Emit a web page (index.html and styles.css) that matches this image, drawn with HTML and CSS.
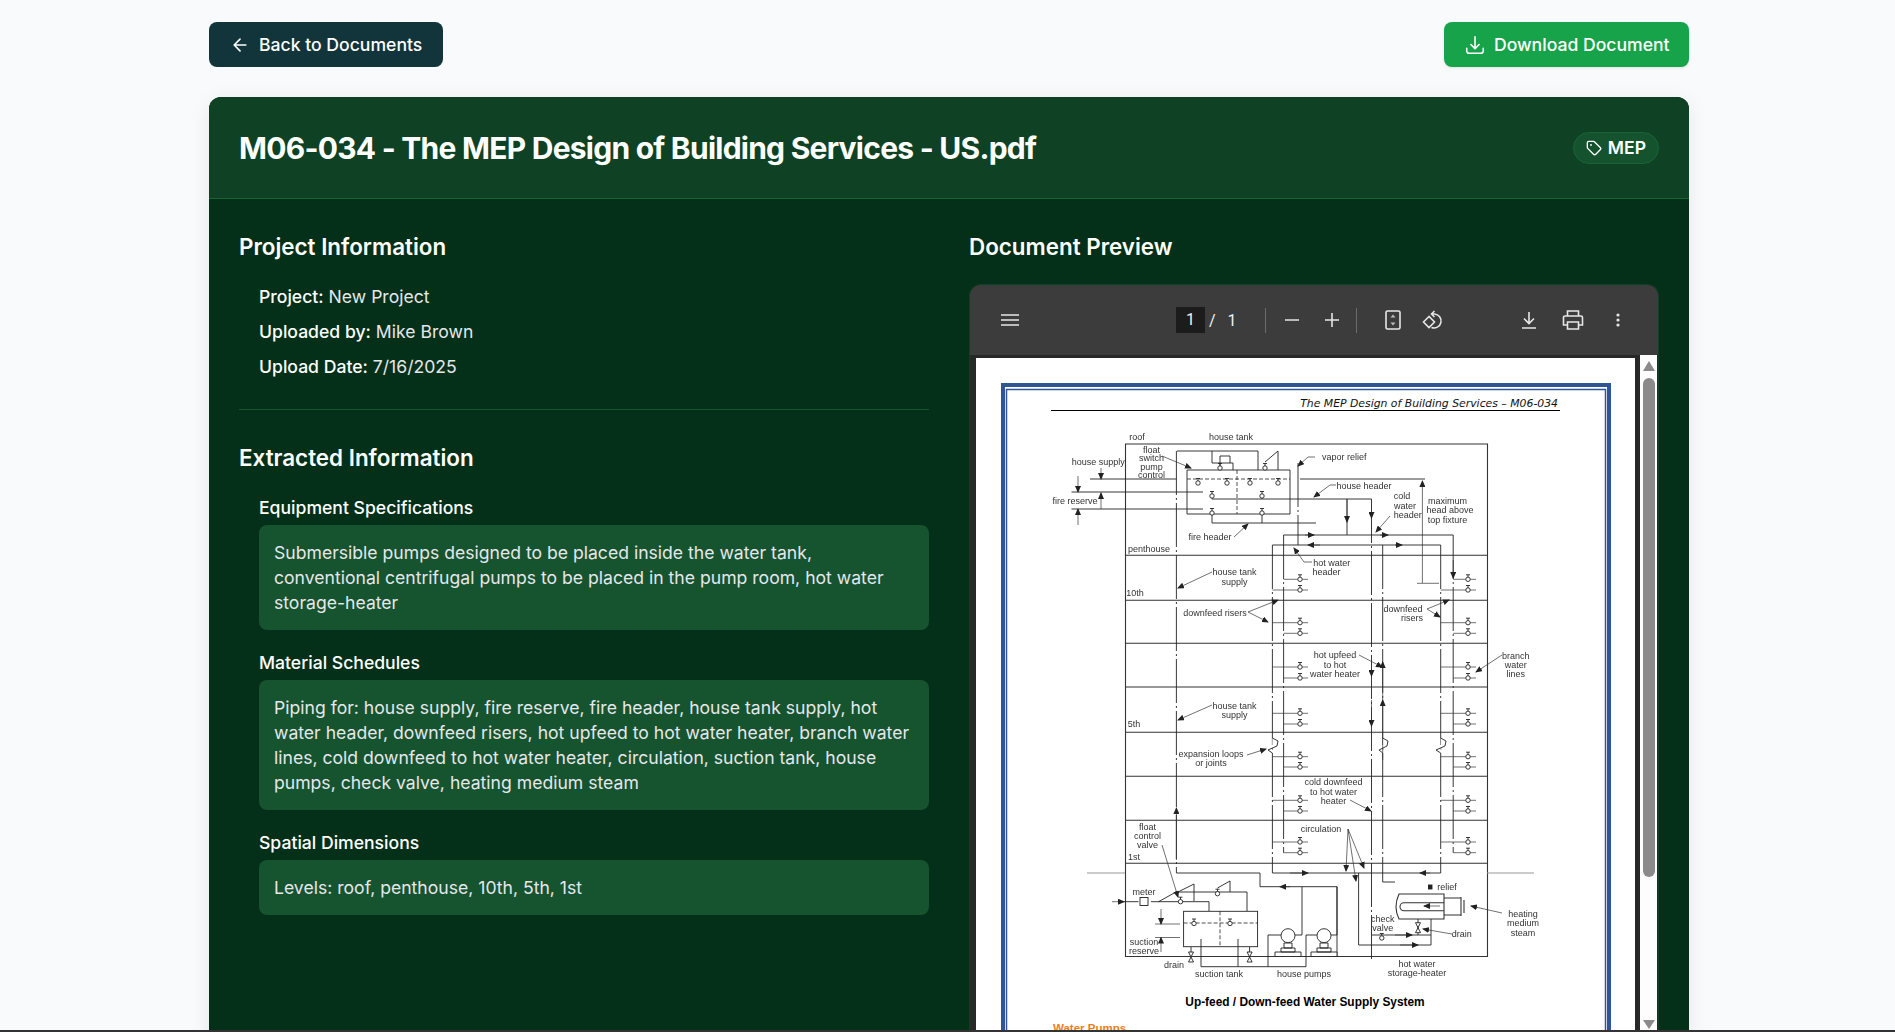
FILE: index.html
```html
<!DOCTYPE html>
<html lang="en">
<head>
  <meta charset="UTF-8" />
  <title>M06-034 - The MEP Design of Building Services - US.pdf</title>
  <link rel="stylesheet" href="styles.css">
</head>
<body>
  <div class="page">
    <div class="top-actions">
      <a class="btn btn-back" href="#">
        <svg class="ico" width="20" height="20" viewBox="0 0 24 24"><path d="M19 12H5M12 19l-7-7 7-7"/></svg>
        Back to Documents
      </a>
      <a class="btn btn-download" href="#">
        <svg class="ico" width="22" height="22" viewBox="0 0 24 24"><path d="M3 15.5v3a2.5 2.5 0 0 0 2.5 2.5h13a2.5 2.5 0 0 0 2.5-2.5v-3M7.5 11.5 12 16l4.500-4.500M12 16V3"/></svg>
        Download Document
      </a>
    </div>

    <div class="doc-card">
      <div class="doc-header">
        <h1>M06-034 - The MEP Design of Building Services - US.pdf</h1>
        <span class="tag">
          <svg class="ico" width="16" height="16" viewBox="0 0 24 24"><path d="M12.586 2.586A2 2 0 0 0 11.172 2H4a2 2 0 0 0-2 2v7.172a2 2 0 0 0 .586 1.414l8.704 8.704a2.426 2.426 0 0 0 3.420 0l6.580-6.580a2.426 2.426 0 0 0 0-3.420z"/><circle cx="7.500" cy="7.500" r=".5"/></svg>
          MEP
        </span>
      </div>

      <div class="doc-body">
        <div class="col-info">
          <h2>Project Information</h2>
          <div class="meta">
            <p><strong>Project:</strong> New Project</p>
            <p><strong>Uploaded by:</strong> Mike Brown</p>
            <p><strong>Upload Date:</strong> 7/16/2025</p>
          </div>
          <hr>
          <h2>Extracted Information</h2>
          <div class="extract">
            <h3>Equipment Specifications</h3>
            <div class="extract-box">Submersible pumps designed to be placed inside the water tank, conventional centrifugal pumps to be placed in the pump room, hot water storage-heater</div>
            <h3>Material Schedules</h3>
            <div class="extract-box">Piping for: house supply, fire reserve, fire header, house tank supply, hot water header, downfeed risers, hot upfeed to hot water heater, branch water lines, cold downfeed to hot water heater, circulation, suction tank, house pumps, check valve, heating medium steam</div>
            <h3>Spatial Dimensions</h3>
            <div class="extract-box">Levels: roof, penthouse, 10th, 5th, 1st</div>
          </div>
        </div>

        <div class="col-preview">
          <h2>Document Preview</h2>
          <div class="viewer">
            <div class="viewer-bar">
              <div class="bar-left">
                <svg class="tool" width="18" height="12" viewBox="0 0 18 12"><path d="M0 1h18M0 6h18M0 11h18"/></svg>
              </div>
              <span class="page-num">1</span>
              <span class="page-of">/</span>
              <span class="page-total">1</span>
              <i class="sep sep-first"></i>
              <button class="tool-btn"><svg class="tool" width="14" height="14" viewBox="0 0 14 14"><path d="M0 7h14"/></svg></button>
              <button class="tool-btn"><svg class="tool" width="14" height="14" viewBox="0 0 14 14"><path d="M0 7h14M7 0v14"/></svg></button>
              <i class="sep"></i>
              <button class="tool-btn tool-fit"><svg class="tool" width="16" height="20" viewBox="0 0 16 20"><rect x="1" y="1" width="14" height="18" rx="1.500"/><path class="solid" d="M8 4.500 10.500 7.500h-5zM8 15.500 5.500 12.500h5z"/></svg></button>
              <button class="tool-btn"><svg class="tool" width="22" height="20" viewBox="0 0 22 20"><path d="M10 4h2.500a7 7 0 1 1-3 13.500M12.500 1 9.500 4l3 3"/><path d="M7 6.500 1.500 12 7 17.500 12.500 12z"/></svg></button>
              <button class="tool-btn tool-save"><svg class="tool" width="16" height="18" viewBox="0 0 16 18"><path d="M8 1v11M3 7.500 8 12.500l5-5M1 17h14"/></svg></button>
              <button class="tool-btn tool-print"><svg class="tool" width="22" height="20" viewBox="0 0 22 20"><path d="M5.500 6V1h11v5M5.500 15H1.500V7.500a1.500 1.500 0 0 1 1.500-1.500h16a1.500 1.500 0 0 1 1.500 1.500V15h-4M5.500 12h11v7h-11z"/></svg></button>
              <button class="tool-btn tool-more"><svg width="4" height="14" viewBox="0 0 4 14"><circle cx="2" cy="2" r="1.600"/><circle cx="2" cy="7" r="1.600"/><circle cx="2" cy="12" r="1.600"/></svg></button>
            </div>
            <div class="viewer-main">
              <div class="pdf-sheet">
                <svg class="drawing" width="659" height="672" viewBox="976 358 659 672">
                  <defs>
                    <marker id="ah" markerWidth="7" markerHeight="6" refX="6" refY="3" orient="auto" markerUnits="userSpaceOnUse"><path d="M0 0 7 3 0 6z" fill="#222"/></marker>
                    <g id="vlv"><path d="M-2-4.500H2M0-4.500V-2" /><circle r="2.200" fill="#fff"/></g>
                    <g id="dv"><path d="M-2.500-5H2.500L-2.500 5H2.500z" fill="#fff"/></g>
                  </defs>

                  <rect class="frame-out" x="1003" y="385" width="606" height="700"/>
                  <rect class="frame-in" x="1006.500" y="389.500" width="599" height="700"/>
                  <text class="running" x="1558" y="407" text-anchor="end">The MEP Design of Building Services – M06-034</text>
                  <path class="rule" d="M1051 410.500H1560"/>

                  <g class="art">
                    <!-- building and floors -->
                    <path class="heavy" d="M1125.500 444H1487.500V956.500H1125.500ZM1125.500 555.300H1487.500M1125.500 600.300H1487.500M1125.500 643.300H1487.500M1125.500 687H1487.500M1125.500 732.300H1487.500M1125.500 776.300H1487.500M1125.500 820.300H1487.500M1125.500 863.300H1487.500"/>
                    <path class="ground" d="M1087 873H1125M1487 873H1534"/>

                    <!-- risers -->
                    <path class="pipe" d="M1272.400 545V873M1283.600 535V852.700M1371.500 499V960M1382.700 545V882H1395M1440.700 545V873M1453.200 535V852.700M1176.400 451V873"/>
                    <path class="line" d="M1283.600 535H1453.200M1272.400 545H1440.700M1272.400 873H1440.700M1300 479H1425M1090 479H1176.400M1071.500 492H1203M1071.500 509H1203"/>
                    <path class="pipe" d="M1298 463V545"/>

                    <!-- roof tank -->
                    <path class="line" d="M1187 514V470H1290V514ZM1177 451H1258V470M1212 451V463H1233V470M1220 466V456H1230V463M1265 462 1278 451V470"/>
                    <path class="water" d="M1187 479H1290M1237 470V514"/>
                    <path class="line" d="M1212 495V499H1371.500M1262 495V499M1212 512V523H1316M1262 512V523M1347 499V535"/>
                    <use href="#vlv" x="1198" y="483"/><use href="#vlv" x="1227" y="483"/><use href="#vlv" x="1250" y="483"/><use href="#vlv" x="1278" y="483"/>
                    <use href="#vlv" x="1220" y="468"/><use href="#vlv" x="1265" y="468"/>
                    <use href="#vlv" x="1212" y="496"/><use href="#vlv" x="1262" y="496"/><use href="#vlv" x="1212" y="513"/><use href="#vlv" x="1262" y="513"/>

                    <!-- branch take-offs -->
                    <path class="thin" d="M1283.600 579.300H1308M1272.400 590H1308M1272.400 622.700H1308M1283.600 633.300H1308M1272.400 667H1308M1283.600 678H1308M1272.400 713.300H1308M1283.600 724H1308M1272.400 756.700H1308M1283.600 767H1308M1272.400 800.300H1308M1283.600 811H1308M1272.400 842H1308M1283.600 852.700H1308"/>
                    <path class="thin" d="M1453.200 579.300H1476M1440.700 590H1476M1440.700 622.700H1476M1453.200 633.300H1476M1440.700 667H1476M1453.200 678H1476M1440.700 713.300H1476M1453.200 724H1476M1440.700 756.700H1476M1453.200 767H1476M1440.700 800.300H1476M1453.200 811H1476M1440.700 842H1476M1453.200 852.700H1476"/>
                    <use href="#vlv" x="1300" y="579.300"/><use href="#vlv" x="1300" y="590"/><use href="#vlv" x="1300" y="622.700"/><use href="#vlv" x="1300" y="633.300"/><use href="#vlv" x="1300" y="667"/><use href="#vlv" x="1300" y="678"/><use href="#vlv" x="1300" y="713.300"/><use href="#vlv" x="1300" y="724"/><use href="#vlv" x="1300" y="756.700"/><use href="#vlv" x="1300" y="767"/><use href="#vlv" x="1300" y="800.300"/><use href="#vlv" x="1300" y="811"/><use href="#vlv" x="1300" y="842"/><use href="#vlv" x="1300" y="852.700"/>
                    <use href="#vlv" x="1468" y="579.300"/><use href="#vlv" x="1468" y="590"/><use href="#vlv" x="1468" y="622.700"/><use href="#vlv" x="1468" y="633.300"/><use href="#vlv" x="1468" y="667"/><use href="#vlv" x="1468" y="678"/><use href="#vlv" x="1468" y="713.300"/><use href="#vlv" x="1468" y="724"/><use href="#vlv" x="1468" y="756.700"/><use href="#vlv" x="1468" y="767"/><use href="#vlv" x="1468" y="800.300"/><use href="#vlv" x="1468" y="811"/><use href="#vlv" x="1468" y="842"/><use href="#vlv" x="1468" y="852.700"/>

                    <!-- expansion loops -->
                    <path class="loop" d="M1272.400 738 1278 741 1277 746 1268 750 1272.400 753M1382.700 738 1388 741 1387 746 1379 750 1382.700 753M1440.700 738 1446 741 1445 746 1436 750 1440.700 753"/>

                    <!-- dimension arrows and leaders -->
                    <path class="thin" marker-end="url(#ah)" d="M1078 476V492"/>
                    <path class="thin" marker-end="url(#ah)" d="M1078 525V509"/>
                    <path class="thin" marker-end="url(#ah)" d="M1101 468V479"/>
                    <path class="thin" marker-end="url(#ah)" d="M1101 509V493"/>
                    <path class="thin" marker-end="url(#ah)" d="M1422.400 583V481"/>
                    <path class="thin" d="M1417 583.300H1439"/>
                    <path class="thin" marker-end="url(#ah)" d="M1347 499V522"/>
                    <path class="thin" marker-end="url(#ah)" d="M1371.500 505V518"/>
                    <path class="thin" marker-end="url(#ah)" d="M1453.200 560V578"/>
                    <path class="thin" marker-end="url(#ah)" d="M1382.700 700V662"/>
                    <path class="thin" marker-end="url(#ah)" d="M1382.700 760V700"/>
                    <path class="thin" marker-end="url(#ah)" d="M1371.500 660V676"/>
                    <path class="thin" marker-end="url(#ah)" d="M1371.500 700V726"/>
                    <path class="thin" marker-end="url(#ah)" d="M1176.400 860V808"/>
                    <path class="thin" marker-end="url(#ah)" d="M1305 535H1314"/>
                    <path class="thin" marker-end="url(#ah)" d="M1380 535H1388"/>
                    <path class="thin" marker-end="url(#ah)" d="M1320 545H1308"/>
                    <path class="thin" marker-end="url(#ah)" d="M1395 545H1402"/>
                    <path class="thin" marker-end="url(#ah)" d="M1290 873H1308"/>
                    <path class="thin" marker-end="url(#ah)" d="M1430 873H1420"/>
                    <path class="thin" marker-end="url(#ah)" d="M1290 886.700H1280"/>
                    <path class="thin" marker-end="url(#ah)" d="M1162 456 1191 468"/>
                    <path class="thin" marker-end="url(#ah)" d="M1315 457H1308L1298 466"/>
                    <path class="thin" marker-end="url(#ah)" d="M1336 485H1330L1314 497"/>
                    <path class="thin" marker-end="url(#ah)" d="M1390 516 1376 532"/>
                    <path class="thin" marker-end="url(#ah)" d="M1234 537 1248 524"/>
                    <path class="thin" marker-end="url(#ah)" d="M1312 562H1304L1294 548"/>
                    <path class="thin" marker-end="url(#ah)" d="M1212 572 1178 588"/>
                    <path class="thin" marker-end="url(#ah)" d="M1248 612 1278 600"/>
                    <path class="thin" marker-end="url(#ah)" d="M1248 612 1268 622"/>
                    <path class="thin" marker-end="url(#ah)" d="M1427 609 1449 600"/>
                    <path class="thin" marker-end="url(#ah)" d="M1427 609 1440 617"/>
                    <path class="thin" marker-end="url(#ah)" d="M1359 655 1382 667"/>
                    <path class="thin" marker-end="url(#ah)" d="M1502 655 1476 672"/>
                    <path class="thin" marker-end="url(#ah)" d="M1212 705 1178 720"/>
                    <path class="thin" marker-end="url(#ah)" d="M1247 755 1266 749"/>
                    <path class="thin" marker-end="url(#ah)" d="M1350 800 1371 811"/>
                    <path class="thin" marker-end="url(#ah)" d="M1348 829 1346 871"/>
                    <path class="thin" marker-end="url(#ah)" d="M1348 829 1356 881"/>
                    <path class="thin" marker-end="url(#ah)" d="M1348 829 1364 868"/>
                    <path class="thin" marker-end="url(#ah)" d="M1162 845 1178 897"/>
                    <path class="thin" marker-end="url(#ah)" d="M1502 913 1471 906"/>
                    <path class="thin" marker-end="url(#ah)" d="M1452 934 1423 929"/>
                    <path class="thin" marker-end="url(#ah)" d="M1112 901.700H1124"/>

                    <!-- basement piping -->
                    <path class="line" d="M1176.400 873H1260V886.700H1337V956.500M1302 886.700V935H1294M1337 886.700V935H1330"/>
                    <path class="line" d="M1124 901.700H1138.500M1151 901.700H1209V911M1158.500 901.700 1176 892H1247V911M1178 892 1194 884V901M1217.500 888 1230 881V892"/>
                    <rect class="line" x="1140" y="897.500" width="8" height="8" fill="#fff"/>
                    <use href="#vlv" x="1180.500" y="901.700"/><use href="#vlv" x="1217.500" y="893.700"/>
                    <rect class="line" x="1183.600" y="911.300" width="74" height="35.400" fill="#fff"/>
                    <path class="water" d="M1183.600 923H1257.600M1220 911.300V946.700"/>
                    <use href="#vlv" x="1194" y="923.500"/><use href="#vlv" x="1230" y="923.500"/>
                    <path class="thin" d="M1155 924H1180M1155 937.500H1180"/>
                    <path class="thin" marker-end="url(#ah)" d="M1161 909V924"/>
                    <path class="thin" marker-end="url(#ah)" d="M1161 952V937.500"/>
                    <path class="line" d="M1201 939V966.700H1306V935H1324M1238 939V966.700M1268 935V966.700M1268 935H1282M1191 947V952M1249.600 947V952"/>
                    <use href="#dv" x="1191" y="957"/><use href="#dv" x="1249.600" y="957"/>

                    <!-- house pumps -->
                    <g class="line">
                      <circle cx="1288" cy="935.700" r="7" fill="#fff"/><circle cx="1324" cy="935.700" r="7" fill="#fff"/>
                      <path d="M1284 943H1292V948H1284ZM1281 948H1295V952H1281ZM1275 952H1301V956.500H1275ZM1320 943H1328V948H1320ZM1317 948H1331V952H1317ZM1311 952H1337V956.500H1311Z" fill="#fff"/>
                    </g>

                    <!-- storage heater -->
                    <path class="heavy" d="M1399 894H1444V919H1399Q1393 907 1399 894ZM1404 902.700H1444V910.700H1404A4 4 0 0 1 1404 902.700ZM1444 898H1461M1444 915H1461M1461 897V916M1464 900V913"/>
                    <rect x="1428.500" y="885" width="3.500" height="4" fill="#222"/>
                    <path class="line" d="M1431 919V945H1358.600V873M1372 935H1431M1418 919V935"/>
                    <use href="#vlv" x="1381.800" y="938"/><use href="#dv" x="1418" y="927.700"/>
                    <path class="thin" marker-end="url(#ah)" d="M1440 906H1424"/>
                    <path class="thin" marker-end="url(#ah)" d="M1395 935H1412"/>
                    <path class="thin" marker-end="url(#ah)" d="M1400 945H1418"/>

                    <!-- labels -->
                    <g class="lbl">
                      <text x="1137" y="440">roof</text><text x="1231" y="440">house tank</text>
                      <text x="1151.400" y="453">float</text><text x="1151.400" y="461">switch</text><text x="1151.400" y="469.500">pump</text><text x="1151.400" y="478">control</text>
                      <text x="1098.300" y="464.500">house supply</text><text x="1344.300" y="460">vapor relief</text><text x="1075" y="504">fire reserve</text><text x="1364" y="488.500">house header</text>
                      <text x="1402" y="499">cold</text><text x="1405" y="508.500">water</text><text x="1407.700" y="517.500">header</text>
                      <text x="1447.400" y="504">maximum</text><text x="1450" y="513">head above</text><text x="1447.400" y="522.500">top fixture</text>
                      <text x="1210" y="540">fire header</text><text x="1149" y="552">penthouse</text>
                      <text x="1331.800" y="566">hot water</text><text x="1326.400" y="575">header</text>
                      <text x="1234.500" y="575">house tank</text><text x="1234.500" y="584.500">supply</text><text x="1135" y="595.500">10th</text>
                      <text x="1215" y="616">downfeed risers</text><text x="1403" y="612">downfeed</text><text x="1412" y="621">risers</text>
                      <text x="1335" y="658">hot upfeed</text><text x="1335" y="667.500">to hot</text><text x="1335" y="677">water heater</text>
                      <text x="1515.700" y="658.500">branch</text><text x="1515.700" y="668">water</text><text x="1515.700" y="677">lines</text>
                      <text x="1234.500" y="708.500">house tank</text><text x="1234.500" y="718">supply</text><text x="1134" y="727">5th</text>
                      <text x="1211" y="756.500">expansion loops</text><text x="1211" y="766">or joints</text>
                      <text x="1333.600" y="785">cold downfeed</text><text x="1333.600" y="794.500">to hot water</text><text x="1333.600" y="804">heater</text>
                      <text x="1321" y="832">circulation</text>
                      <text x="1147.400" y="829.500">float</text><text x="1147.400" y="839">control</text><text x="1147.400" y="848">valve</text><text x="1134" y="859.500">1st</text>
                      <text x="1144" y="894.500">meter</text><text x="1447" y="890">relief</text>
                      <text x="1523" y="917">heating</text><text x="1523" y="926">medium</text><text x="1523" y="935.500">steam</text>
                      <text x="1382.700" y="922">check</text><text x="1382.700" y="931">valve</text><text x="1461.700" y="937">drain</text>
                      <text x="1144" y="945">suction</text><text x="1144" y="954">reserve</text><text x="1174" y="967.500">drain</text>
                      <text x="1219" y="977">suction tank</text><text x="1304" y="977">house pumps</text>
                      <text x="1417" y="967">hot water</text><text x="1417" y="976">storage-heater</text>
                    </g>
                  </g>

                  <text class="caption" x="1305" y="1006" text-anchor="middle">Up-feed / Down-feed Water Supply System</text>
                  <text class="sub-head" x="1053" y="1032">Water Pumps</text>
                </svg>
              </div>
              <div class="scroll-track">
                <span class="arrow-up"></span>
                <span class="scroll-thumb"></span>
                <span class="arrow-down"></span>
              </div>
            </div>
          </div>
        </div>
      </div>
    </div>
  </div>
  <div class="window-edge"></div>
</body>
</html>
```

FILE: styles.css
```css
* {
  box-sizing: border-box;
  margin: 0;
  padding: 0;
}
html, body {
  height: 1032px;
  overflow: hidden;
}
body {
  background: #f8fafc;
  font-family: Inter, 'Noto Sans', sans-serif;
  color: #fff;
}
.page {
  height: 1030px;
  overflow: hidden;
  padding: 22px 206px 0 209px;
}
.window-edge {
  height: 2px;
  background: #333;
}
.top-actions {
  display: flex;
  justify-content: space-between;
  margin-bottom: 30px;
}
.btn {
  display: flex;
  align-items: center;
  gap: 10px;
  height: 45px;
  padding: 0 20px;
  border-radius: 8px;
  color: #fff;
  font-size: 17.6px;
  font-weight: 500;
  white-space: nowrap;
  text-decoration: none;
}
.btn-back {
  background: #12343b;
  width: 234px;
  padding-left: 21px;
  gap: 9px;
}
.btn-download {
  background: #16a34a;
  width: 245px;
  gap: 8px;
  box-shadow: 0 1px 3px rgba(0,0,0,0.1);
}
.ico {
  fill: none;
  stroke: currentColor;
  stroke-width: 2;
  stroke-linecap: round;
  stroke-linejoin: round;
  flex: none;
}
.btn-download .ico {
  stroke-width: 1.7;
}
.doc-card {
  background: #042f18;
  border-radius: 12px;
  box-shadow: 0 4px 20px rgba(0,0,0,0.08);
  height: 1000px;
  overflow: hidden;
}
.doc-header {
  display: flex;
  justify-content: space-between;
  align-items: center;
  height: 102px;
  padding: 0 30px;
  background: #0f4224;
  border-bottom: 1px solid #166534;
}
.doc-header h1 {
  font-size: 30px;
  font-weight: 700;
  letter-spacing: -0.75px;
}
.tag {
  display: flex;
  align-items: center;
  gap: 6px;
  height: 32px;
  padding: 0 12px;
  background: #14532d;
  border: 1px solid #166534;
  border-radius: 16px;
  font-size: 17.6px;
  font-weight: 600;
}
.doc-body {
  display: grid;
  grid-template-columns: 690px 690px;
  gap: 40px;
  padding: 32px 30px 0;
}
h2 {
  font-size: 22.4px;
  font-weight: 600;
  line-height: 32px;
}
.meta {
  padding: 21px 0 0 20px;
}
.meta p {
  font-size: 17.6px;
  line-height: 25px;
  margin-bottom: 10px;
  color: #e5e7eb;
}
.meta strong {
  color: #fff;
  font-weight: 500;
}
hr {
  border: none;
  border-top: 1px solid #14532d;
  margin: 30px 0 32px;
}
.extract {
  padding: 21px 0 0 20px;
}
.extract h3 {
  font-size: 17.6px;
  font-weight: 500;
  line-height: 25px;
  margin-bottom: 5px;
}
.extract-box {
  background: #16532f;
  border-radius: 8px;
  padding: 15px;
  font-size: 17.6px;
  line-height: 25px;
  color: #e5e7eb;
  margin-bottom: 20px;
}
.viewer {
  margin-top: 21px;
  background: #282828;
  border: 1px solid #0f4224;
  border-bottom: none;
  border-radius: 12px 12px 0 0;
  overflow: hidden;
  height: 760px;
}
.viewer-bar {
  display: flex;
  align-items: center;
  height: 70px;
  background: #3c3c3c;
  color: #f1f1f1;
  font-family: Roboto, sans-serif;
}
.bar-left {
  width: 206px;
  padding-left: 31px;
  display: flex;
}
.tool {
  fill: none;
  stroke: #e6e6e6;
  stroke-width: 1.6;
}
.tool .solid {
  fill: #bdbdbd;
  stroke: none;
}
.page-num {
  width: 29px;
  height: 26px;
  background: #1c1c1c;
  text-align: center;
  font-size: 16px;
  line-height: 26px;
}
.page-of {
  margin-left: 4px;
  font-size: 16px;
}
.page-total {
  margin-left: 12px;
  font-size: 16px;
}
.sep {
  width: 1px;
  height: 25px;
  background: #6b6b6b;
  margin: 0 4px;
}
.sep-first {
  margin-left: 28px;
  margin-right: 6px;
}
.tool-btn {
  width: 40px;
  height: 40px;
  background: none;
  border: none;
  display: flex;
  align-items: center;
  justify-content: center;
}
.tool-fit {
  margin-left: 12px;
}
.tool-save {
  margin-left: 56px;
}
.tool-print {
  margin-left: 4px;
}
.tool-more {
  margin-left: 5px;
}
.tool-more svg {
  fill: #e6e6e6;
}
.viewer-main {
  display: flex;
  padding-left: 6px;
  height: 688px;
}
.pdf-sheet {
  width: 659px;
  height: 672px;
  margin-top: 3px;
  background: #fff;
  flex: none;
}
.drawing {
  display: block;
}
.frame-out {
  fill: none;
  stroke: #2f5597;
  stroke-width: 4;
}
.frame-in {
  fill: none;
  stroke: #2f5597;
  stroke-width: 1.500;
}
.running {
  font-family: 'DejaVu Sans', sans-serif;
  font-style: italic;
  font-size: 10.850px;
  fill: #111;
}
.rule {
  stroke: #000;
  stroke-width: 1;
}
.art {
  filter: blur(0.3px);
  fill: none;
  stroke: #222;
  stroke-width: 0.9;
}
.heavy {
  stroke: #333;
  stroke-width: 1.100;
  fill: none;
}
.ground {
  stroke: #999;
  stroke-width: 1.200;
}
.line {
  stroke: #222;
  stroke-width: 0.900;
}
.thin {
  stroke: #333;
  stroke-width: 0.700;
  fill: none;
}
.pipe {
  stroke: #222;
  stroke-width: 0.900;
  stroke-dasharray: 44 3 2 3;
  fill: none;
}
.water {
  stroke: #222;
  stroke-width: 0.800;
  stroke-dasharray: 4 2;
}
.loop {
  stroke: #222;
  stroke-width: 0.900;
  fill: #fff;
}
.lbl text {
  font-family: 'Liberation Sans', sans-serif;
  font-size: 9px;
  fill: #333;
  stroke: none;
  text-anchor: middle;
}
.caption {
  font-family: 'Liberation Sans', sans-serif;
  font-weight: 700;
  font-size: 11.900px;
  fill: #000;
}
.sub-head {
  font-family: 'Liberation Sans', sans-serif;
  font-weight: 700;
  font-size: 11.500px;
  fill: #ed7d1a;
}
.scroll-track {
  width: 17px;
  height: 675px;
  margin-left: 5px;
  background: #fdfdfd;
  display: flex;
  flex-direction: column;
  align-items: center;
}
.arrow-up {
  margin-top: 6px;
  border: 6px solid transparent;
  border-top: none;
  border-bottom: 10px solid #8a8a8a;
}
.scroll-thumb {
  width: 12px;
  height: 499px;
  margin-top: 7px;
  background: #8a8a8a;
  border-radius: 6px;
}
.arrow-down {
  margin-top: auto;
  margin-bottom: 1px;
  border: 6px solid transparent;
  border-bottom: none;
  border-top: 9px solid #8a8a8a;
}
```
